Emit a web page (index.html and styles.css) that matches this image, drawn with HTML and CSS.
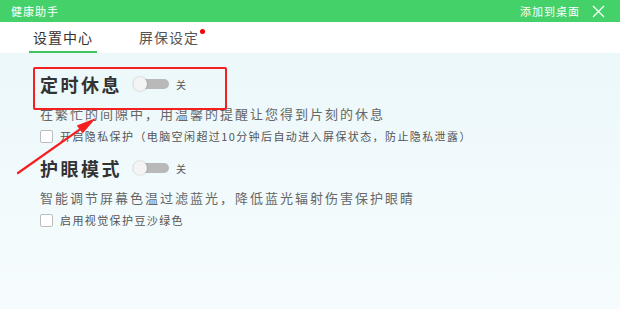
FILE: index.html
```html
<!DOCTYPE html>
<html>
<head lang="zh">
<meta charset="UTF-8">
<title>健康助手</title>
<link rel="stylesheet" href="styles.css">
</head>
<body>
<div class="win">
    <div class="titlebar">
        <span class="app-name">健康助手</span>
        <span class="add-desk">添加到桌面</span>
        <svg class="close" width="13" height="13" viewBox="0 0 13 13"><path d="M1 1L12 12M12 1L1 12" stroke="#fff" stroke-width="1.2" fill="none"/></svg>
    </div>
    <div class="tabs">
        <div class="tab active">设置中心</div>
        <div class="tab">屏保设定<i class="dot"></i></div>
    </div>
    <div class="content">
        <div class="section">
            <div class="sec-head">
                <h2>定时休息</h2>
                <span class="switch"><i></i></span>
                <span class="sw-label">关</span>
            </div>
            <p class="desc">在繁忙的间隙中，用温馨的提醒让您得到片刻的休息</p>
            <label class="option"><span class="box"></span>开启隐私保护（电脑空闲超过10分钟后自动进入屏保状态，防止隐私泄露）</label>
        </div>
        <div class="section">
            <div class="sec-head">
                <h2>护眼模式</h2>
                <span class="switch"><i></i></span>
                <span class="sw-label">关</span>
            </div>
            <p class="desc">智能调节屏幕色温过滤蓝光，降低蓝光辐射伤害保护眼睛</p>
            <label class="option"><span class="box"></span>启用视觉保护豆沙绿色</label>
        </div>

        <!-- annotation marks drawn over the screenshot -->
        <div class="mark-box"></div>
        <svg class="mark-arrow" width="110" height="130" viewBox="0 0 110 130">
            <path d="M18 120L81 75.6" stroke="#f41f1f" stroke-width="2.2" stroke-linecap="round" fill="none"/>
            <polygon points="96,65 82.6,80.6 76.8,72.4" fill="#f41f1f"/>
        </svg>
    </div>
</div>
</body>
</html>
```

FILE: styles.css
```css
*{margin:0;padding:0;box-sizing:border-box;}
html,body{width:620px;height:309px;overflow:hidden;}
body{font-family:"Noto Sans CJK SC","Noto Sans",sans-serif;background:#fff;}
.win{width:620px;height:309px;display:flex;flex-direction:column;}

.titlebar{height:22px;background:#45d16a;color:#fff;display:flex;align-items:center;padding:0 15px 0 11px;font-size:11px;letter-spacing:1px;}
.app-name{flex:1;}
.add-desk{margin-right:12px;}
.close{display:block;}

.tabs{height:31px;background:#fff;display:flex;padding-left:29px;}
.tab{position:relative;height:31px;line-height:30px;font-size:14px;color:#555;padding:0 4px;margin-right:38px;letter-spacing:1px;}
.tab.active{color:#333;border-bottom:2px solid #3cc65d;}
.dot{position:absolute;right:-2px;top:7px;width:5px;height:5px;border-radius:50%;background:#f40000;}

.content{position:relative;flex:1;background:linear-gradient(#ecf8fa,#f6fcfe);padding:19px 0 0 40px;}
.section + .section{margin-top:12px;}
.sec-head{height:24px;display:flex;align-items:center;}
.sec-head h2{font-size:18px;font-weight:bold;color:#333;letter-spacing:2.5px;width:93px;}
.switch{position:relative;width:36px;height:10px;border-radius:5px;background:#b9b9b9;}
.switch i{position:absolute;left:0;top:-2px;width:14px;height:14px;border-radius:50%;background:#f4f4f4;box-shadow:0 0 2px rgba(0,0,0,0.25);}
.sw-label{font-size:10px;color:#555;margin-left:7px;}

.desc{margin-top:10px;height:16px;line-height:16px;font-size:13px;color:#666;letter-spacing:2px;}
.option{margin-top:6px;height:16px;display:flex;align-items:center;font-size:11px;color:#555;letter-spacing:1.4px;}
.box{width:13px;height:13px;background:#fff;border:1px solid #bdbdbd;border-radius:2px;margin-right:7px;}

.mark-box{position:absolute;left:33px;top:14px;width:194px;height:43px;border:2px solid #f41f1f;border-radius:2px;}
.mark-arrow{position:absolute;left:0;top:0;}
```
